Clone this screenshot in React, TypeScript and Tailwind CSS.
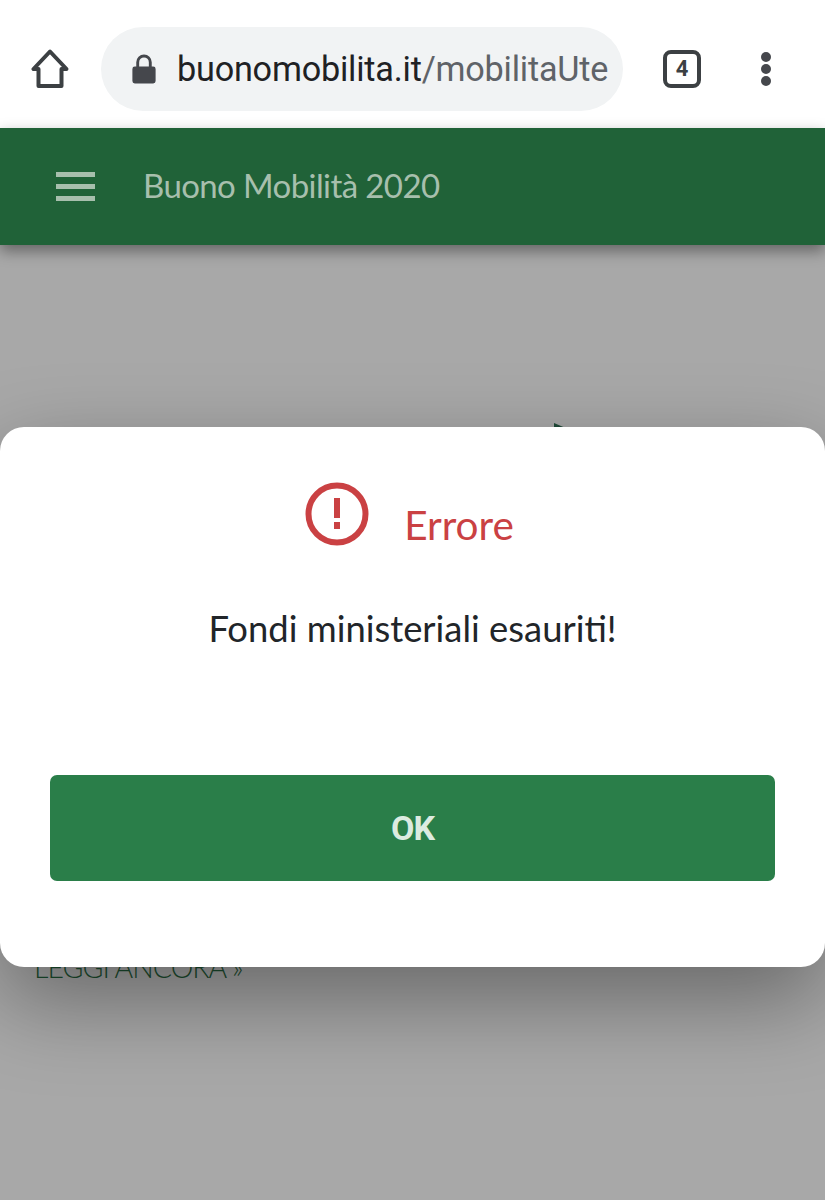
const titleFont = "font-['Lato','Liberation_Sans',sans-serif]";

function BrowserBar() {
  return (
    <div className="flex h-[128px] items-center bg-white pl-[30px] pt-[10px]">
      <svg className="h-[40px] w-[40px] shrink-0" viewBox="0 0 40 40" fill="none" stroke="#3c4043" strokeWidth="4" strokeLinejoin="round">
        <path d="M20 2.500 3.500 20H8.500V37H31.500V20H36.500Z" />
      </svg>
      <div className="ml-[31px] flex h-[84px] w-[522px] items-center overflow-hidden rounded-[42px] bg-[#f1f3f4] pl-[31px]">
        <svg className="h-[30px] w-[24px] shrink-0" viewBox="0 0 24 31" fill="#45474c">
          <path d="M4 13V8.500a8 8 0 0 1 16 0V13h1.500A2.500 2.500 0 0 1 24 15.500V28a2.500 2.500 0 0 1-2.500 2.500h-19A2.500 2.500 0 0 1 0 28V15.500A2.500 2.500 0 0 1 2.500 13ZM7 13h10V8.500a5 5 0 0 0-10 0Z" />
        </svg>
        <div className="ml-[21px] whitespace-nowrap font-['Roboto',sans-serif] text-[34.2px] leading-none tracking-[-0.2px] text-[#202124]">
          buonomobilita.it<span className="text-[#5f6368]">/mobilitaUte</span>
        </div>
      </div>
      <div className="ml-[40px] flex h-[38px] w-[38px] items-center justify-center rounded-[8px] border-[4px] border-[#3c4043] font-['Roboto',sans-serif] text-[22px] font-bold leading-none text-[#3c4043]">
        4
      </div>
      <div className="ml-[60px] flex flex-col gap-[2px]">
        <div className="h-[10px] w-[10px] rounded-full bg-[#45474c]" />
        <div className="h-[10px] w-[10px] rounded-full bg-[#45474c]" />
        <div className="h-[10px] w-[10px] rounded-full bg-[#45474c]" />
      </div>
    </div>
  );
}

function SiteHeader() {
  return (
    <div className="relative z-10 flex h-[117px] items-center bg-[#206238] pl-[56px] shadow-[0_6px_14px_rgba(0,0,0,0.4)]">
      <div className="flex w-[39px] flex-col gap-[7px]">
        <div className="h-[5px] bg-[#a7bfad]" />
        <div className="h-[5px] bg-[#a7bfad]" />
        <div className="h-[5px] bg-[#a7bfad]" />
      </div>
      <div className={`${titleFont} mb-[2px] ml-[48px] text-[33px] leading-none tracking-[-0.6px] text-[#a7bfad]`}>Buono Mobilità 2020</div>
    </div>
  );
}

function ErrorDialog() {
  return (
    <div className="absolute left-0 right-0 top-[427px] h-[540px] rounded-[24px] bg-white px-[50px] pt-[55px] shadow-[0_33px_88px_rgba(0,0,0,0.38)]">
      <div className="flex justify-center pr-[6px]">
        <svg className="h-[64px] w-[64px]" viewBox="0 0 64 64" fill="none">
          <circle cx="32" cy="32" r="28.500" stroke="#ca4143" strokeWidth="6" />
          <rect x="29" y="16" width="6" height="20" fill="#ca4143" />
          <rect x="29" y="40" width="6" height="7" fill="#ca4143" />
        </svg>
        <div className={`${titleFont} ml-[35px] mt-[23px] text-[40.5px] leading-none text-[#ca4143]`}>Errore</div>
      </div>
      <div className={`${titleFont} mt-[64px] text-center text-[36.4px] leading-none text-[#212529]`}>Fondi ministeriali esauriti!</div>
      <button className="mt-[129px] h-[106px] w-full rounded-[7px] bg-[#2a7e49] font-['Roboto',sans-serif] text-[34px] font-bold tracking-[-1px] text-[#dcebe0]">
        OK
      </button>
    </div>
  );
}

export default function App() {
  return (
    <div className="relative h-[1200px] w-[825px] overflow-hidden bg-[#a8a8a8]">
      <BrowserBar />
      <SiteHeader />
      {/* scraps of the page behind the dialog */}
      <div className="absolute left-[554px] top-[423px] h-0 w-0 border-y-[6px] border-l-[14px] border-y-transparent border-l-[#1f4a38]" />
      <div className={`${titleFont} absolute left-[34px] top-[952px] text-[28.500px] font-light leading-[30px] tracking-[-1px] text-[#1c4f30]`}>LEGGI ANCORA »</div>
      <ErrorDialog />
    </div>
  );
}
